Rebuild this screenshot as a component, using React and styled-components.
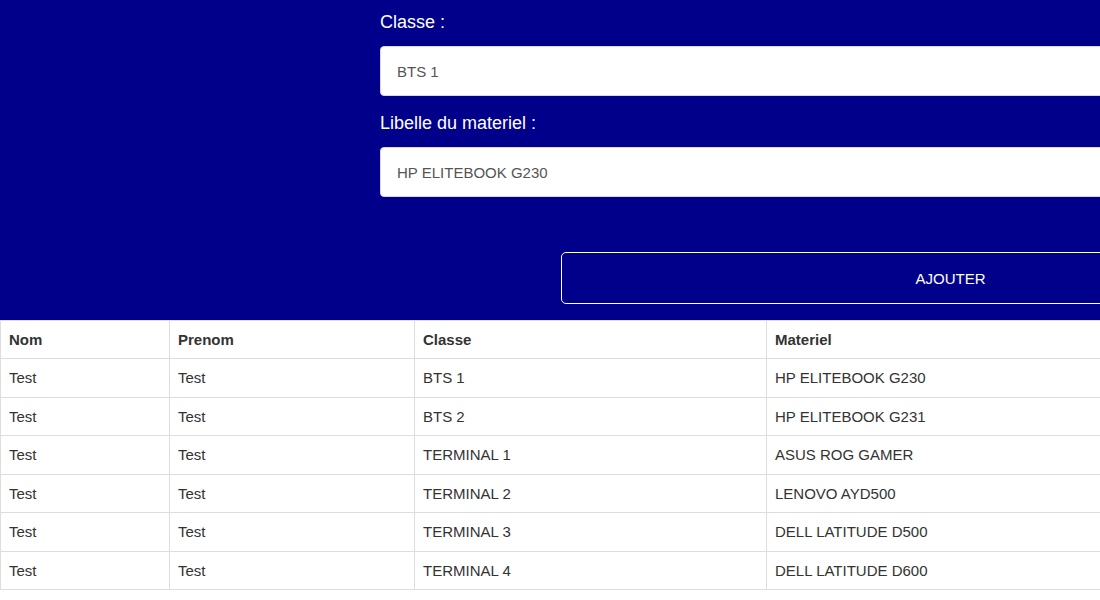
import styled, { createGlobalStyle } from "styled-components";

const GlobalStyle = createGlobalStyle`
  html, body {
    margin: 0;
    padding: 0;
    overflow: hidden;
    background: #fff;
  }
  body {
    font-family: "Liberation Sans", Arial, sans-serif;
  }
`;

const Page = styled.div`
  width: 1340px;
`;

const HeaderWrapper = styled.div`
  background-color: #00008b;
  display: grid;
  grid-template-columns: 380px 960px;
  padding: 10px 0 16px;
`;

const FormWrapper = styled.form`
  grid-column: 2;
  display: flex;
  flex-direction: column;
`;

const Label = styled.label`
  color: #fff;
  font-size: 18px;
  line-height: 24px;
  margin: ${(p) => (p.$first ? "0" : "15px")} 0 12px;
`;

const Input = styled.input`
  box-sizing: border-box;
  height: 50px;
  width: 100%;
  padding: 0 16px;
  border: 1px solid #d6d6e8;
  border-radius: 4px;
  background: #fff;
  font-family: inherit;
  font-size: 15px;
  color: #555;
  outline: none;
`;

const ButtonRow = styled.div`
  display: flex;
  justify-content: flex-end;
  margin-top: 55px;
`;

const Button = styled.button`
  box-sizing: border-box;
  width: 779px;
  height: 52px;
  background: transparent;
  border: 1px solid #fff;
  border-radius: 5px;
  color: #fff;
  font-family: inherit;
  font-size: 15px;
  cursor: pointer;
`;

const Table = styled.table`
  width: 100%;
  border-collapse: collapse;
  font-size: 15px;
  line-height: 1.43;
  color: #333;
  table-layout: fixed;
`;

const Cell = styled.td`
  border: 1px solid #ddd;
  padding: 8px 8px;
  text-align: left;
  font-weight: ${(p) => (p.$head ? "bold" : "normal")};
`;

const rows = [
  ["Test", "Test", "BTS 1", "HP ELITEBOOK G230"],
  ["Test", "Test", "BTS 2", "HP ELITEBOOK G231"],
  ["Test", "Test", "TERMINAL 1", "ASUS ROG GAMER"],
  ["Test", "Test", "TERMINAL 2", "LENOVO AYD500"],
  ["Test", "Test", "TERMINAL 3", "DELL LATITUDE D500"],
  ["Test", "Test", "TERMINAL 4", "DELL LATITUDE D600"],
];

const App = () => {
  return (
    <Page>
      <GlobalStyle />
      <HeaderWrapper>
        <FormWrapper onSubmit={(e) => e.preventDefault()}>
          <Label $first>Classe :</Label>
          <Input defaultValue="BTS 1" />
          <Label>Libelle du materiel :</Label>
          <Input defaultValue="HP ELITEBOOK G230" />
          <ButtonRow>
            <Button type="submit">AJOUTER</Button>
          </ButtonRow>
        </FormWrapper>
      </HeaderWrapper>
      <Table>
        <colgroup>
          <col style={{ width: 169 }} />
          <col style={{ width: 245 }} />
          <col style={{ width: 352 }} />
          <col />
        </colgroup>
        <thead>
          <tr>
            <Cell as="th" $head>Nom</Cell>
            <Cell as="th" $head>Prenom</Cell>
            <Cell as="th" $head>Classe</Cell>
            <Cell as="th" $head>Materiel</Cell>
          </tr>
        </thead>
        <tbody>
          {rows.map((row, i) => (
            <tr key={i}>
              {row.map((value, j) => (
                <Cell key={j}>{value}</Cell>
              ))}
            </tr>
          ))}
        </tbody>
      </Table>
    </Page>
  );
};

export default App;
